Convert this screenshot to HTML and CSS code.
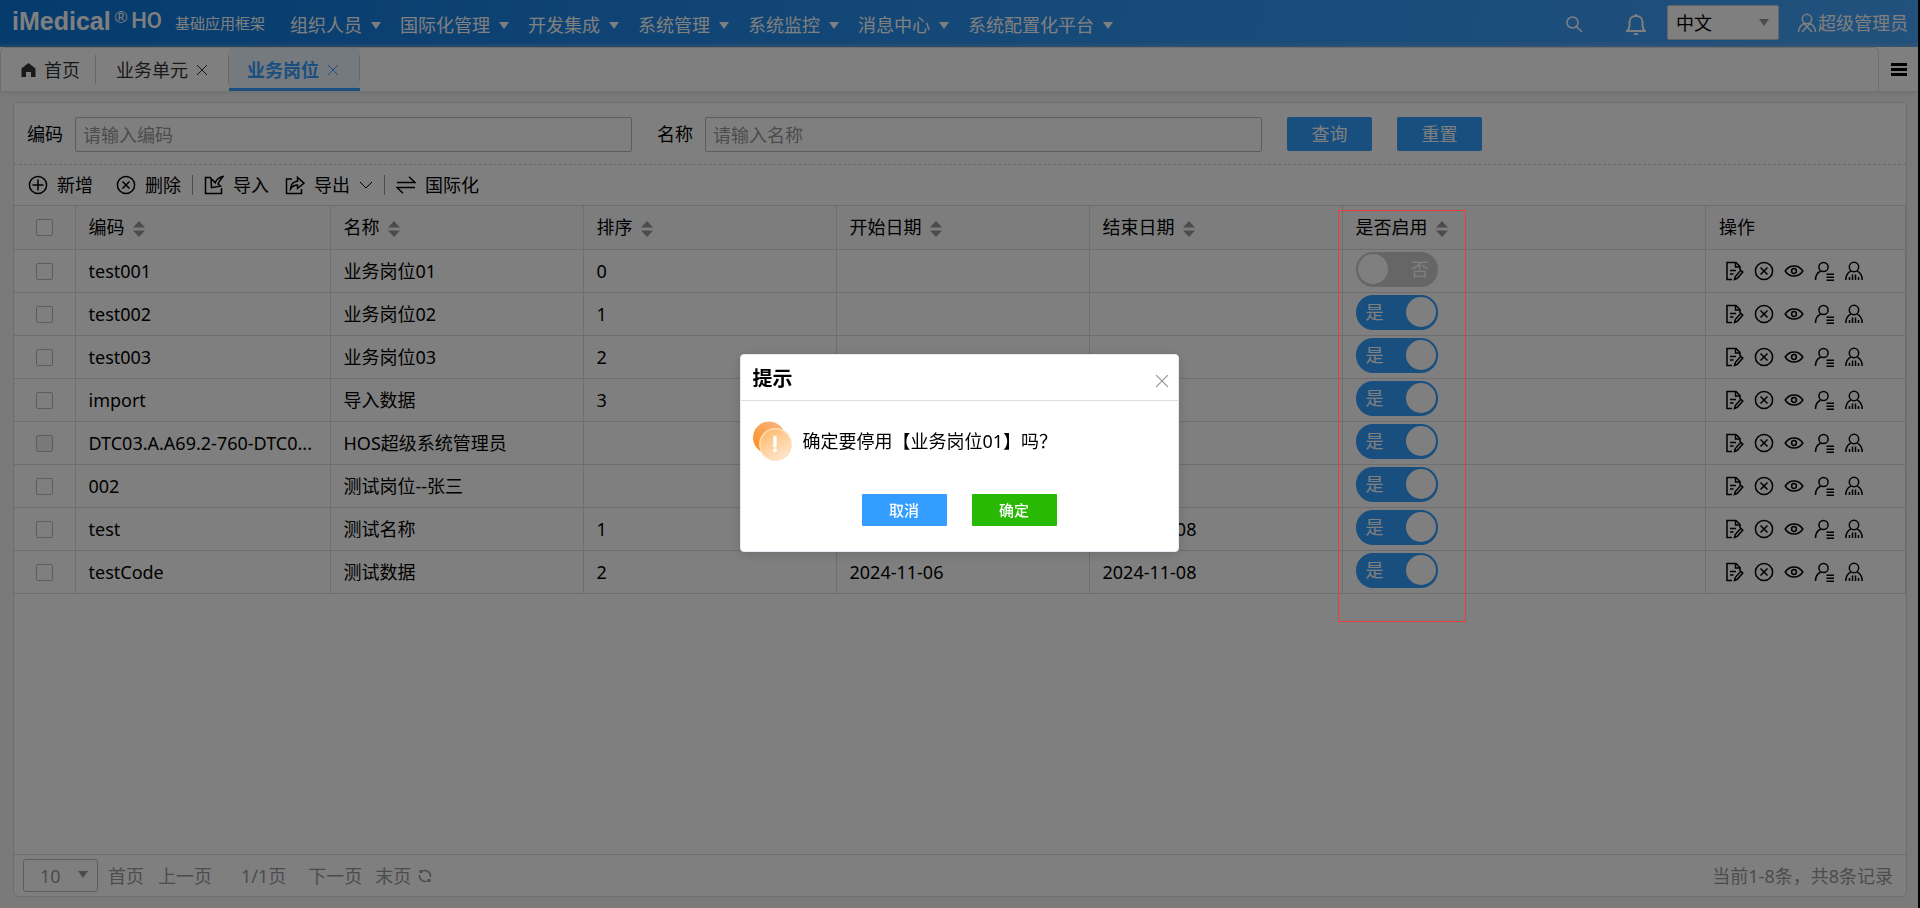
FILE: index.html
```html
<!DOCTYPE html>
<html lang="zh-CN">
<head>
<meta charset="utf-8">
<title>业务岗位</title>
<link rel="stylesheet" href="styles.css">
</head>
<body>
<svg class="sprite" aria-hidden="true">
  <symbol id="i-edit" viewBox="0 0 20 20"><path d="M8 18.500H3V1.500h9l4 4V9M11.500 1.500V6H16M6 9.500h6M6 13h3.500M10.500 18.500l.8-3 5.500-6.200 2 1.800-5.500 6.200z"/></symbol>
  <symbol id="i-del" viewBox="0 0 20 20"><circle cx="10" cy="10" r="8.600"/><path d="M6.500 6.500l7 7M13.500 6.500l-7 7"/></symbol>
  <symbol id="i-add" viewBox="0 0 20 20"><circle cx="10" cy="10" r="8.600"/><path d="M10 4.500v11M4.500 10h11"/></symbol>
  <symbol id="i-eye" viewBox="0 0 20 20"><path d="M1.200 10C5.500 3.200 14.500 3.200 18.800 10 14.500 16.800 5.500 16.800 1.200 10z"/><circle cx="10" cy="10" r="2.400"/></symbol>
  <symbol id="i-userlist" viewBox="0 0 20 20"><circle cx="9.500" cy="6" r="4.600"/><path d="M1.500 19c0-4.500 2-7.500 5-8.800M12.500 13.200H20M12.500 16.200H20M12.500 19.200H20"/></symbol>
  <symbol id="i-group" viewBox="0 0 20 20"><circle cx="10" cy="6" r="4.700"/><path d="M1.800 19c0-4.500 2-7.300 5-8.800M18.200 19c0-4.500-2-7.300-5-8.800M5.500 19v-3M8.500 19v-5.500M11.500 19v-5.500M14.500 19v-3"/></symbol>
  <symbol id="i-user" viewBox="0 0 20 20"><circle cx="10" cy="6" r="4.700"/><path d="M1.500 19c0-4 2-6.500 5.300-8.700L15 19M18.500 19c0-4-2-6.500-5.300-8.700L5 19"/></symbol>
  <symbol id="i-close" viewBox="0 0 12 12"><path d="M1 1l10 10M11 1L1 11"/></symbol>
  <symbol id="i-import" viewBox="0 0 20 20"><path d="M7 2.500H1.500v16h16V13M19 1.500c-3 .5-6.500 3-7.800 6.300L7 3.500l.5 9.200 9-1.700-2.500-2c1-2.500 3-5 5-7.500z"/></symbol>
  <symbol id="i-export" viewBox="0 0 20 20"><path d="M7 4H1.500v14.500h15V14M5.500 14c.3-5 3-7.500 7-7.800V2.500L19 8.200l-6.500 5.300V10c-3 0-5 1-7 4z"/></symbol>
  <symbol id="i-swap" viewBox="0 0 20 20"><path d="M1 7.500h18L13 1.800M19 12.500H1l6 5.700"/></symbol>
  <symbol id="i-down" viewBox="0 0 14 8"><path d="M1 1l6 6 6-6"/></symbol>
  <symbol id="i-caret" viewBox="0 0 10 7"><path d="M0 0h10L5 7z"/></symbol>
  <symbol id="i-sort" viewBox="0 0 12 16"><path d="M0 6.500L6 0l6 6.500zM0 9.500h12L6 16z"/></symbol>
</svg>

<div class="page">
  <header class="topbar">
    <div class="brand">
      <span class="brand-name">iMedical</span><span class="brand-mark">®</span><span class="brand-sub">HO</span>
      <span class="brand-text">基础应用框架</span>
    </div>
    <nav class="menu">
      <a href="#">组织人员<svg><use href="#i-caret"/></svg></a>
      <a href="#">国际化管理<svg><use href="#i-caret"/></svg></a>
      <a href="#">开发集成<svg><use href="#i-caret"/></svg></a>
      <a href="#">系统管理<svg><use href="#i-caret"/></svg></a>
      <a href="#">系统监控<svg><use href="#i-caret"/></svg></a>
      <a href="#">消息中心<svg><use href="#i-caret"/></svg></a>
      <a href="#">系统配置化平台<svg><use href="#i-caret"/></svg></a>
    </nav>
    <div class="tools">
      <button class="tool tool-search" aria-label="搜索"><svg width="18" height="18" viewBox="0 0 18 18"><circle cx="7.500" cy="7.500" r="5.500"/><path d="M11.500 11.500L17 17"/></svg></button>
      <button class="tool tool-bell" aria-label="通知"><svg width="20" height="22" viewBox="0 0 20 22"><path d="M1 18h18c-1.800-1.500-2.500-3-2.500-5.500V9c0-3.500-2.500-6-6.500-6S3.500 5.500 3.500 9v3.500C3.500 15 2.800 16.500 1 18zM8 20.500c1 .8 3 .8 4 0M10 1v2"/></svg></button>
      <span class="lang"><select aria-label="语言"><option>中文</option></select><svg><use href="#i-caret"/></svg></span>
      <button class="tool tool-user"><svg><use href="#i-user"/></svg>超级管理员</button>
    </div>
  </header>

  <div class="tabs">
    <div class="tab-list">
      <a class="tab tab-home" href="#"><svg class="home" viewBox="0 0 14 14"><path d="M7 0L0 5.500V14h4.500V9h5v5H14V5.500z"/></svg>首页</a>
      <a class="tab" href="#">业务单元<svg class="x"><use href="#i-close"/></svg></a>
      <a class="tab active" href="#">业务岗位<svg class="x"><use href="#i-close"/></svg></a>
    </div>
    <button class="tab-menu" aria-label="菜单"><i></i><i></i><i></i></button>
  </div>

  <main class="card">
    <form class="search">
      <label for="code">编码</label><input id="code" type="text" placeholder="请输入编码">
      <label class="second" for="name">名称</label><input id="name" type="text" placeholder="请输入名称">
      <div class="search-buttons">
        <button type="button" class="btn">查询</button>
        <button type="button" class="btn">重置</button>
      </div>
    </form>

    <div class="toolbar">
      <button><svg><use href="#i-add"/></svg>新增</button>
      <button class="wide"><svg><use href="#i-del"/></svg>删除</button>
      <i class="bar"></i>
      <button><svg><use href="#i-import"/></svg>导入</button>
      <button class="near"><svg><use href="#i-export"/></svg>导出<svg class="chev"><use href="#i-down"/></svg></button>
      <i class="bar"></i>
      <button><svg><use href="#i-swap"/></svg>国际化</button>
    </div>

    <div class="grid">
    <table>
      <colgroup><col class="c-check"><col class="c-code"><col class="c-mid"><col class="c-mid"><col class="c-mid"><col class="c-mid"><col><col class="c-act"></colgroup>
      <thead>
        <tr>
          <th class="check"><input type="checkbox" aria-label="全选"></th>
          <th>编码<svg><use href="#i-sort"/></svg></th>
          <th>名称<svg><use href="#i-sort"/></svg></th>
          <th>排序<svg><use href="#i-sort"/></svg></th>
          <th>开始日期<svg><use href="#i-sort"/></svg></th>
          <th>结束日期<svg><use href="#i-sort"/></svg></th>
          <th>是否启用<svg><use href="#i-sort"/></svg></th>
          <th>操作</th>
        </tr>
      </thead>
      <tbody>
        <tr>
          <td class="check"><input type="checkbox" aria-label="选择"></td><td>test001</td><td>业务岗位01</td><td>0</td><td></td><td></td>
          <td><label class="switch"><input type="checkbox" role="switch"><span>否</span></label></td>
          <td><div class="acts"><button aria-label="编辑"><svg><use href="#i-edit"/></svg></button><button aria-label="删除"><svg><use href="#i-del"/></svg></button><button aria-label="查看"><svg><use href="#i-eye"/></svg></button><button aria-label="人员列表"><svg><use href="#i-userlist"/></svg></button><button aria-label="人员授权"><svg><use href="#i-group"/></svg></button></div></td>
        </tr>
        <tr>
          <td class="check"><input type="checkbox" aria-label="选择"></td><td>test002</td><td>业务岗位02</td><td>1</td><td></td><td></td>
          <td><label class="switch"><input type="checkbox" role="switch" checked><span>是</span></label></td>
          <td><div class="acts"><button aria-label="编辑"><svg><use href="#i-edit"/></svg></button><button aria-label="删除"><svg><use href="#i-del"/></svg></button><button aria-label="查看"><svg><use href="#i-eye"/></svg></button><button aria-label="人员列表"><svg><use href="#i-userlist"/></svg></button><button aria-label="人员授权"><svg><use href="#i-group"/></svg></button></div></td>
        </tr>
        <tr>
          <td class="check"><input type="checkbox" aria-label="选择"></td><td>test003</td><td>业务岗位03</td><td>2</td><td></td><td></td>
          <td><label class="switch"><input type="checkbox" role="switch" checked><span>是</span></label></td>
          <td><div class="acts"><button aria-label="编辑"><svg><use href="#i-edit"/></svg></button><button aria-label="删除"><svg><use href="#i-del"/></svg></button><button aria-label="查看"><svg><use href="#i-eye"/></svg></button><button aria-label="人员列表"><svg><use href="#i-userlist"/></svg></button><button aria-label="人员授权"><svg><use href="#i-group"/></svg></button></div></td>
        </tr>
        <tr>
          <td class="check"><input type="checkbox" aria-label="选择"></td><td>import</td><td>导入数据</td><td>3</td><td></td><td></td>
          <td><label class="switch"><input type="checkbox" role="switch" checked><span>是</span></label></td>
          <td><div class="acts"><button aria-label="编辑"><svg><use href="#i-edit"/></svg></button><button aria-label="删除"><svg><use href="#i-del"/></svg></button><button aria-label="查看"><svg><use href="#i-eye"/></svg></button><button aria-label="人员列表"><svg><use href="#i-userlist"/></svg></button><button aria-label="人员授权"><svg><use href="#i-group"/></svg></button></div></td>
        </tr>
        <tr>
          <td class="check"><input type="checkbox" aria-label="选择" disabled></td><td>DTC03.A.A69.2-760-DTC0...</td><td>HOS超级系统管理员</td><td></td><td></td><td></td>
          <td><label class="switch"><input type="checkbox" role="switch" checked><span>是</span></label></td>
          <td><div class="acts"><button aria-label="编辑"><svg><use href="#i-edit"/></svg></button><button aria-label="删除"><svg><use href="#i-del"/></svg></button><button aria-label="查看"><svg><use href="#i-eye"/></svg></button><button aria-label="人员列表"><svg><use href="#i-userlist"/></svg></button><button aria-label="人员授权"><svg><use href="#i-group"/></svg></button></div></td>
        </tr>
        <tr>
          <td class="check"><input type="checkbox" aria-label="选择"></td><td>002</td><td>测试岗位--张三</td><td></td><td></td><td></td>
          <td><label class="switch"><input type="checkbox" role="switch" checked><span>是</span></label></td>
          <td><div class="acts"><button aria-label="编辑"><svg><use href="#i-edit"/></svg></button><button aria-label="删除"><svg><use href="#i-del"/></svg></button><button aria-label="查看"><svg><use href="#i-eye"/></svg></button><button aria-label="人员列表"><svg><use href="#i-userlist"/></svg></button><button aria-label="人员授权"><svg><use href="#i-group"/></svg></button></div></td>
        </tr>
        <tr>
          <td class="check"><input type="checkbox" aria-label="选择"></td><td>test</td><td>测试名称</td><td>1</td><td></td><td>2024-11-08</td>
          <td><label class="switch"><input type="checkbox" role="switch" checked><span>是</span></label></td>
          <td><div class="acts"><button aria-label="编辑"><svg><use href="#i-edit"/></svg></button><button aria-label="删除"><svg><use href="#i-del"/></svg></button><button aria-label="查看"><svg><use href="#i-eye"/></svg></button><button aria-label="人员列表"><svg><use href="#i-userlist"/></svg></button><button aria-label="人员授权"><svg><use href="#i-group"/></svg></button></div></td>
        </tr>
        <tr>
          <td class="check"><input type="checkbox" aria-label="选择"></td><td>testCode</td><td>测试数据</td><td>2</td><td>2024-11-06</td><td>2024-11-08</td>
          <td><label class="switch"><input type="checkbox" role="switch" checked><span>是</span></label></td>
          <td><div class="acts"><button aria-label="编辑"><svg><use href="#i-edit"/></svg></button><button aria-label="删除"><svg><use href="#i-del"/></svg></button><button aria-label="查看"><svg><use href="#i-eye"/></svg></button><button aria-label="人员列表"><svg><use href="#i-userlist"/></svg></button><button aria-label="人员授权"><svg><use href="#i-group"/></svg></button></div></td>
        </tr>
      </tbody>
    </table>
    <div class="marker"></div>
    </div>

    <footer class="pager">
      <span class="size"><select aria-label="每页条数"><option>10</option></select><svg><use href="#i-caret"/></svg></span>
      <button>首页</button>
      <button class="prev">上一页</button>
      <span class="current">1/1页</span>
      <button class="next">下一页</button>
      <button>末页</button>
      <button class="reload" aria-label="刷新"><svg width="14" height="14" viewBox="0 0 14 14"><path d="M4.500 2.200A5.500 5.500 0 0 1 12.500 7v1M9.500 11.800A5.500 5.500 0 0 1 1.500 7V6"/><path class="dot" d="M1.500 1h3v3h-3zM9.500 10h3v3h-3z"/></svg></button>
      <span class="total">当前1-8条，共8条记录</span>
    </footer>
  </main>
</div>

<div class="overlay">
  <section class="dialog" role="dialog" aria-labelledby="dlg-title">
    <div class="dialog-head">
      <h2 id="dlg-title">提示</h2>
      <button aria-label="关闭"><svg><use href="#i-close"/></svg></button>
    </div>
    <div class="dialog-body">
      <svg class="warn" viewBox="0 0 40 40">
        <defs>
          <linearGradient id="w1" x1=".8" y1="0" x2="0" y2="1"><stop offset="0" stop-color="#f6b682"/><stop offset="1" stop-color="#ff8a14"/></linearGradient>
          <linearGradient id="w2" x1=".1" y1="0" x2=".7" y2="1"><stop offset="0" stop-color="#fdb765"/><stop offset="1" stop-color="#ffe7cf"/></linearGradient>
        </defs>
        <circle cx="16.500" cy="16.500" r="16.500" fill="url(#w1)"/>
        <circle cx="23" cy="23.500" r="16" fill="url(#w2)" stroke="#ffdcb5"/>
        <path d="M22.500 16v9" stroke="#fff" stroke-width="3.500" stroke-linecap="round"/><circle cx="22.500" cy="29.500" r="2" fill="#fff"/>
      </svg>
      <p>确定要停用【业务岗位01】吗？</p>
    </div>
    <div class="dialog-foot">
      <button class="cancel">取消</button>
      <button class="ok">确定</button>
    </div>
  </section>
</div>
</body>
</html>
```
FILE: styles.css
```css
* { box-sizing: border-box; }

body {
  margin: 0;
  font-family: "Noto Sans", "Noto Sans CJK SC", sans-serif;
  font-size: 18px;
  line-height: 24px;
  color: #000;
  background: #f5f5f5;
  border-right: 2px solid #000;
}

button, input, select {
  font: inherit;
  color: inherit;
  margin: 0;
}

button {
  padding: 0;
  border: 0;
  background: none;
  white-space: nowrap;
}

a { color: inherit; text-decoration: none; }
svg { flex: none; fill: none; stroke: currentColor; stroke-width: 1.5; }
.sprite { display: none; }

.page {
  display: flex;
  flex-direction: column;
  min-height: 100vh;
}

/* top bar */
.topbar {
  display: flex;
  align-items: flex-start;
  height: 47px;
  padding: 0 10px 0 12px;
  color: #fff;
  background: linear-gradient(100deg, #0a76da, #2e96f4 60%, #44a2fa);
  box-shadow: inset 0 -5px 5px -4px rgba(190, 200, 210, .6);
}

.brand { display: flex; align-items: center; height: 41px; }
.brand-name { font: bold 25px/30px "Liberation Sans", sans-serif; }
.brand-mark { font: 17px/20px "Liberation Sans", sans-serif; margin: 0 4px 6px; }
.brand-sub { font: 500 22px/24px Roboto, sans-serif; }
.brand-text { font-size: 15px; margin: 4px 0 0 13px; }

.menu { display: flex; gap: 19px; margin-left: 25px; padding-top: 13px; white-space: nowrap; }
.menu a { display: flex; align-items: center; gap: 9px; }
.menu svg, .lang svg, .size svg { width: 10px; height: 7px; fill: currentColor; stroke: none; }

.tools { display: flex; align-items: center; margin-left: auto; height: 45px; }
.tool { display: flex; align-items: center; }
.tool-search { margin-right: 43px; padding-top: 2px; }
.tool-bell { margin-right: 21px; padding-top: 2px; }
.tool-bell svg { stroke-width: 2; }
.tool-user svg { width: 20px; height: 20px; }
.tool-user { gap: 1px; margin-left: 18px; }

.lang, .size { position: relative; color: #999; }
.lang select, .size select {
  appearance: none;
  border: 1px solid #ccc;
  border-radius: 2px;
  background: #fff;
}
.lang select { display: block; width: 112px; height: 35px; padding: 0 8px; color: #000; }
.lang svg { position: absolute; right: 10px; top: 14px; }

/* tabs */
.tabs {
  display: flex;
  height: 44px;
  background: #fff;
  box-shadow: 0 1px 5px rgba(0, 0, 0, .12);
}
.tab-list {
  display: flex;
  flex: 1;
  border: 1px solid #ddd;
  border-width: 1px 1px 0;
  border-radius: 5px 5px 0 0;
}
.tab {
  position: relative;
  display: flex;
  align-items: center;
  gap: 8px;
  padding: 0 21px 0 20px;
  color: #333;
}
.tab::after {
  content: "";
  position: absolute;
  right: 0;
  top: 7px;
  bottom: 7px;
  border-right: 1px solid #ccc;
}
.tab svg { width: 12px; height: 12px; }
.tab svg.x { stroke-width: 1; }
.tab-home { padding: 0 16px 0 20px; }
.tab svg.home { width: 15px; height: 14px; fill: #333; stroke: none; }
.tab.active {
  padding: 3px 21px 0 18px;
  color: #339eff;
  font-weight: bold;
  background: #e9f4fc;
  border-bottom: 3px solid #339eff;
}
.tab-menu {
  display: flex;
  flex-direction: column;
  justify-content: center;
  gap: 2px;
  padding: 0 11px 0 12px;
}
.tab-menu i { width: 16px; height: 3px; background: #000; }

/* card */
.card {
  flex: 1;
  display: flex;
  flex-direction: column;
  margin: 11px 11px 11px 13px;
  border: 1px solid #ddd;
  border-radius: 5px;
  background: #fff;
}

.search {
  display: flex;
  align-items: flex-start;
  padding: 14px 424px 12px 13px;
  border-bottom: 1px dashed #d2d2d2;
}
.search label { flex: none; width: 48px; padding-top: 5px; }
.search label.second { margin-left: 25px; }
.search input {
  flex: 1;
  min-width: 0;
  height: 35px;
  padding: 0 7px;
  border: 1px solid #bbb;
  border-radius: 2px;
  background: #fff;
}
.search input::placeholder { color: #999; opacity: 1; }
.search-buttons { display: flex; gap: 25px; margin-left: 25px; }
.btn {
  width: 85px;
  height: 34px;
  border-radius: 2px;
  color: #fff;
  background: #339eff;
}

.toolbar {
  display: flex;
  align-items: center;
  height: 40px;
  padding-left: 14px;
}
.toolbar button { display: flex; align-items: center; gap: 9px; }
.toolbar button.wide { margin-left: 23px; }
.toolbar button.near { margin-left: 16px; }
.toolbar svg { width: 20px; height: 20px; }
.toolbar svg.chev { width: 14px; height: 8px; stroke-width: 1; }
.toolbar .bar { width: 1px; height: 20px; margin: 0 11px; background: #999; }

/* table */
.grid { position: relative; flex: 1; }
table {
  width: 100%;
  table-layout: fixed;
  border-collapse: collapse;
  border-top: 1px solid #ddd;
}
.c-check { width: 61px; }
.c-code { width: 255px; }
.c-mid { width: 253px; }
.c-act { width: 200px; }
th, td {
  height: 43px;
  padding: 0 0 0 13px;
  border: 1px solid #ddd;
  border-left: 0;
  text-align: left;
  font-weight: inherit;
  white-space: nowrap;
  overflow: hidden;
}
th { height: 44px; padding-bottom: 2px; background: #fafafa; }
th svg { width: 12px; height: 16px; margin-left: 8px; fill: #999; stroke: none; vertical-align: -3px; }
th.check, td.check { padding: 0; text-align: center; }
.check input {
  appearance: none;
  display: block;
  width: 17px;
  height: 17px;
  margin: 0 auto;
  border: 1px solid #bbb;
  border-radius: 2px;
  background: #fff;
}
.check input:disabled { background: #f2f2f2; }

.switch { position: relative; display: block; width: 82px; margin-bottom: 3px; color: #fff; }
.switch input {
  appearance: none;
  display: block;
  width: 82px;
  height: 35px;
  border-radius: 17px;
  background: #ccc;
}
.switch input::before {
  content: "";
  position: absolute;
  left: 2px;
  top: 2px;
  width: 30px;
  height: 30px;
  border-radius: 50%;
  background: #fff;
}
.switch input:checked { background: #339eff; }
.switch input:checked::before { left: 50px; }
.switch span { position: absolute; top: 5px; right: 9px; }
.switch input:checked + span { left: 10px; right: auto; }

.acts { display: flex; gap: 10px; padding-left: 5px; }
.acts button, .acts svg { display: block; width: 20px; height: 20px; }

.marker {
  position: absolute;
  z-index: 20;
  left: 1324px;
  top: 5px;
  width: 128px;
  height: 412px;
  border: 1px solid #f03c38;
}

/* pager */
.pager {
  display: flex;
  align-items: center;
  height: 42px;
  padding: 0 13px 0 9px;
  border-top: 1px solid #ddd;
  color: #999;
}
.size { margin-right: 10px; }
.size select { display: block; width: 75px; height: 33px; padding: 0 16px; border-color: #bbb; border-radius: 3px; }
.size svg { position: absolute; right: 10px; top: 12px; }
.prev { margin-left: 14px; }
.current { margin: 0 22px 0 29px; }
.next { margin-right: 13px; }
.reload { margin-left: 7px; }
.reload svg { display: block; }
.reload .dot { fill: currentColor; stroke: none; }
.total { margin-left: auto; }

/* dialog */
.overlay {
  position: fixed;
  inset: 0;
  z-index: 10;
  display: flex;
  align-items: center;
  justify-content: center;
  padding: 0 2px 3px 0;
  background: rgba(0, 0, 0, .5);
}
.dialog {
  width: 439px;
  border: 1px solid #e6ebf5;
  border-radius: 4px;
  background: #fff;
  box-shadow: 0 2px 12px rgba(0, 0, 0, .15);
}
.dialog-head {
  display: flex;
  align-items: center;
  justify-content: space-between;
  height: 46px;
  padding: 4px 9px 0 12px;
  border-bottom: 1px solid #ddd;
}
.dialog-head h2 { margin: 0; font-size: 20px; line-height: 28px; }
.dialog-head svg { display: block; width: 14px; height: 14px; margin-top: 4px; color: #909399; stroke-width: 1; }
.dialog-body { display: flex; align-items: center; gap: 11px; padding: 20px 12px 0; }
.dialog-body p { margin: 0; }
.warn { width: 39px; height: 40px; stroke: none; }
.dialog-foot { display: flex; justify-content: center; gap: 25px; padding: 33px 0 25px; }
.dialog-foot button {
  width: 85px;
  height: 32px;
  border-radius: 1px;
  font-size: 15px;
  font-weight: 500;
  color: #fff;
  background: #339eff;
}
.dialog-foot .ok { background: #28b905; }
```
